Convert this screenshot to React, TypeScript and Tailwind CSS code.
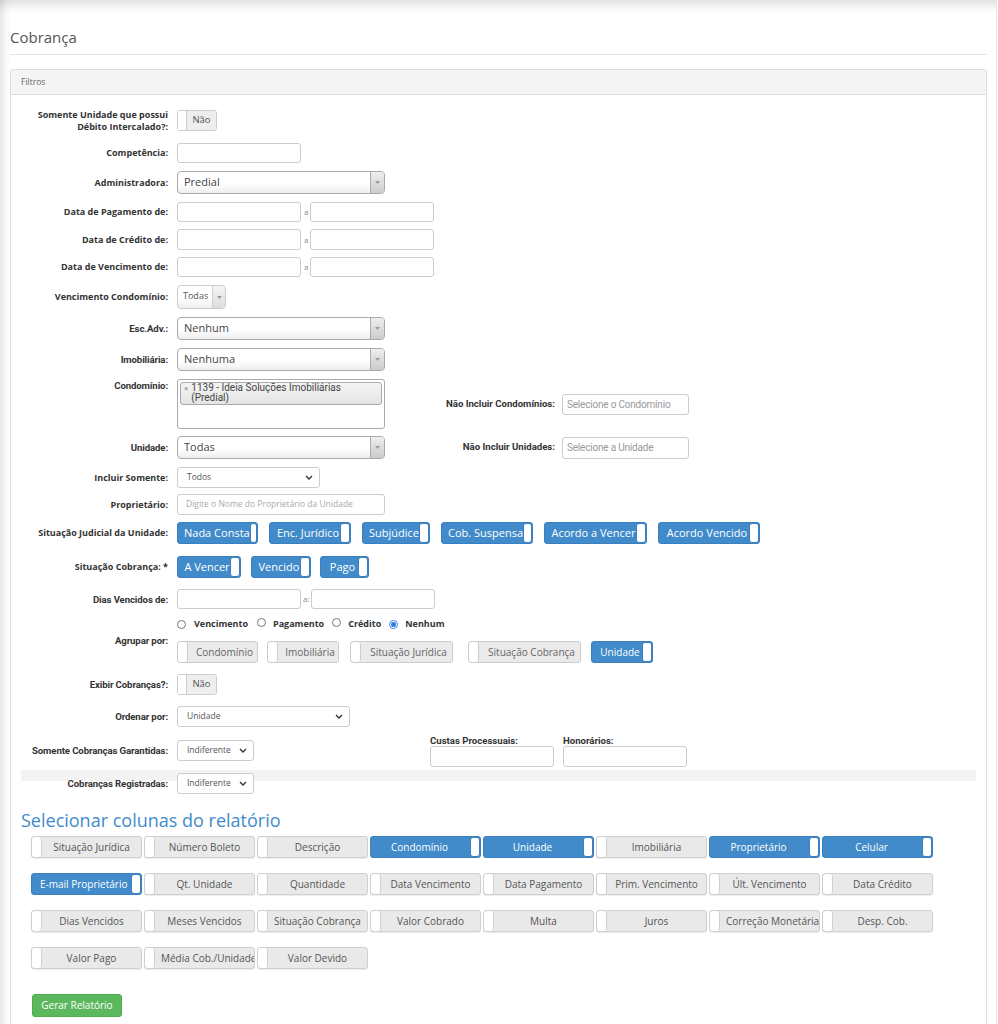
import React from "react";

type P = { children?: React.ReactNode; className?: string };

function Lbl({ children, className = "" }: P) {
  return (
    <div className={`w-[157px] shrink-0 text-right font-bold text-[9px] leading-[12px] text-[#333] font-['Open_Sans',sans-serif] ${className}`}>
      {children}
    </div>
  );
}

function LblC({ children, className = "" }: P) {
  return (
    <div className={`w-[157px] shrink-0 text-right font-bold text-[9.6px] leading-[11px] text-[#333] font-['Roboto',sans-serif] tracking-[-0.1px] ${className}`}>
      {children}
    </div>
  );
}

function Row({ children, className = "" }: P) {
  return <div className={`flex items-center ${className}`}>{children}</div>;
}

function Ctl({ children, className = "" }: P) {
  return <div className={`ml-[9px] flex items-center ${className}`}>{children}</div>;
}

function Inp({ className = "" }: P) {
  return <div className={`h-[20px] w-[124px] rounded-[3px] border border-[#ccc] bg-white ${className}`} />;
}

function Arrow() {
  return (
    <div className="flex w-[14px] items-center justify-center border-l border-[#aaa] bg-[linear-gradient(to_bottom,#eee,#ccc)]">
      <svg width="5" height="3" viewBox="0 0 5 3"><path d="M0 0h5L2.5 3z" fill="#999" /></svg>
    </div>
  );
}

function S2({ text, className = "" }: { text: string; className?: string }) {
  return (
    <div className={`flex h-[23px] w-[208px] overflow-hidden rounded-[4px] border border-[#aaa] bg-[linear-gradient(to_bottom,#fff_55%,#eee)] ${className}`}>
      <div className="flex-1 pl-[6px] pt-[3px] text-[11px] leading-[14px] text-[#444]">{text}</div>
      <Arrow />
    </div>
  );
}

function NSel({ text, className = "" }: { text: string; className?: string }) {
  return (
    <div className={`flex h-[21px] items-center justify-between rounded-[3px] border border-[#ccc] bg-white pl-[9px] pr-[6px] ${className}`}>
      <span className="text-[8.5px] text-[#555]">{text}</span>
      <svg width="8" height="5" viewBox="0 0 8 5"><path d="M1 1l3 3 3-3" stroke="#333" strokeWidth="1.4" fill="none" /></svg>
    </div>
  );
}

function Nao() {
  return (
    <div className="flex h-[21px] w-[40px] overflow-hidden rounded-[3px] border border-[#ccc]">
      <div className="w-[9px] border-r border-[#ccc] bg-white" />
      <div className="flex flex-1 items-center justify-center bg-[#eee] text-[9.5px] text-[#555]">Não</div>
    </div>
  );
}

function BlueT({ text, className = "", size = "text-[11px]" }: { text: string; className?: string; size?: string }) {
  return (
    <div className={`flex h-[22px] shrink-0 overflow-hidden rounded-[3px] border border-[#3a7fc0] bg-[#428bca] ${className}`}>
      <div className={`flex flex-1 items-center justify-center whitespace-nowrap pl-[6px] text-white ${size}`}>{text}</div>
      <div className="w-[10px] rounded-[3px] border border-[#3a7fc0] bg-white" />
    </div>
  );
}

function GrayT({ text, className = "" }: { text: string; className?: string }) {
  return (
    <div className={`flex h-[22px] shrink-0 overflow-hidden rounded-[3px] border border-[#ccc] bg-[#eaeaea] ${className}`}>
      <div className="w-[10px] rounded-[3px] border-r border-[#ccc] bg-white" />
      <div className="flex flex-1 items-center justify-center whitespace-nowrap pl-[4px] text-[10px] text-[#666]">{text}</div>
    </div>
  );
}

function ColBtn({ text, on }: { text: string; on?: boolean }) {
  if (on) {
    return (
      <div className="flex h-[22px] w-[111px] overflow-hidden rounded-[3px] border border-[#3a7fc0] bg-[#428bca]">
        <div className="flex-1 overflow-hidden whitespace-nowrap pl-[8px] pr-[10px] text-center text-[10px] leading-[20px] text-white">{text}</div>
        <div className="w-[10px] shrink-0 rounded-[3px] border border-[#3a7fc0] bg-white" />
      </div>
    );
  }
  return (
    <div className="flex h-[22px] w-[111px] overflow-hidden rounded-[3px] border border-[#d0d0d0] bg-[#e9e9e9] shadow-[0_1px_1px_rgba(0,0,0,0.08)]">
      <div className="w-[10px] shrink-0 rounded-[3px] border-r border-[#d0d0d0] bg-white" />
      <div className="flex-1 overflow-hidden whitespace-nowrap px-[6px] text-center text-[10px] leading-[20px] text-[#555]">{text}</div>
    </div>
  );
}

function Radio({ on }: { on?: boolean }) {
  return on ? (
    <span className="inline-flex h-[9px] w-[9px] items-center justify-center rounded-full border border-[#3b82f6] bg-white">
      <span className="h-[5px] w-[5px] rounded-full bg-[#2f7ce0]" />
    </span>
  ) : (
    <span className="inline-block h-[9px] w-[9px] rounded-full border border-[#777] bg-white" />
  );
}

const cols: [string, boolean][][] = [
  [["Situação Jurídica", false], ["Número Boleto", false], ["Descrição", false], ["Condomínio", true], ["Unidade", true], ["Imobiliária", false], ["Proprietário", true], ["Celular", true]],
  [["E-mail Proprietário", true], ["Qt. Unidade", false], ["Quantidade", false], ["Data Vencimento", false], ["Data Pagamento", false], ["Prim. Vencimento", false], ["Últ. Vencimento", false], ["Data Crédito", false]],
  [["Dias Vencidos", false], ["Meses Vencidos", false], ["Situação Cobrança", false], ["Valor Cobrado", false], ["Multa", false], ["Juros", false], ["Correção Monetária", false], ["Desp. Cob.", false]],
  [["Valor Pago", false], ["Média Cob./Unidade", false], ["Valor Devido", false]],
];

export default function App() {
  return (
    <div className="min-h-[1024px] w-[997px] border-r border-[#e6e6e6] bg-white font-['Open_Sans',sans-serif] shadow-[inset_10px_0_8px_-7px_rgba(0,0,0,0.13),inset_0_14px_10px_-9px_rgba(0,0,0,0.13)]">
      <div className="pl-[10px] pr-[9px] pt-[27px]">
        <div className="h-[28px] border-b border-[#e3e3e3] text-[15px] leading-[20px] text-[#555]">Cobrança</div>
        <div className="mt-[14px] rounded-t-[3px] border border-[#ddd] border-b-0">
          <div className="flex h-[25px] items-center border-b border-[#ddd] bg-[#f5f5f5] pl-[10px] text-[8.5px] text-[#666]">Filtros</div>
          <div className="pb-[10px]">
            <Row className="mt-[15px] h-[21px]">
              <Lbl>Somente Unidade que possui<br />Débito Intercalado?:</Lbl>
              <Ctl><Nao /></Ctl>
            </Row>
            <Row className="mt-[12px]">
              <Lbl>Competência:</Lbl>
              <Ctl><Inp /></Ctl>
            </Row>
            <Row className="mt-[8px]">
              <Lbl>Administradora:</Lbl>
              <Ctl><S2 text="Predial" /></Ctl>
            </Row>
            <Row className="mt-[8px]">
              <Lbl>Data de Pagamento de:</Lbl>
              <Ctl><Inp /><span className="ml-[3px] mr-[2px] text-[8px] text-[#888]">a</span><Inp /></Ctl>
            </Row>
            <Row className="mt-[7px]">
              <Lbl>Data de Crédito de:</Lbl>
              <Ctl><Inp className="h-[21px]" /><span className="ml-[3px] mr-[2px] text-[8px] text-[#888]">a</span><Inp className="h-[21px]" /></Ctl>
            </Row>
            <Row className="mt-[7px]">
              <Lbl>Data de Vencimento de:</Lbl>
              <Ctl><Inp /><span className="ml-[3px] mr-[2px] text-[8px] text-[#888]">a</span><Inp /></Ctl>
            </Row>
            <Row className="mt-[8px]">
              <Lbl>Vencimento Condomínio:</Lbl>
              <Ctl>
                <div className="flex h-[24px] w-[49px] overflow-hidden rounded-[4px] border border-[#ccc] bg-[linear-gradient(to_bottom,#fff_55%,#eee)]">
                  <div className="flex-1 pl-[5px] pt-[4px] text-[9px] leading-[12px] text-[#555]">Todas</div>
                  <div className="flex w-[13px] items-center justify-center border-l border-[#ccc] bg-[linear-gradient(to_bottom,#f4f4f4,#ddd)]">
                    <svg width="5" height="3" viewBox="0 0 5 3"><path d="M0 0h5L2.5 3z" fill="#999" /></svg>
                  </div>
                </div>
              </Ctl>
            </Row>
            <Row className="mt-[8px]">
              <LblC>Esc.Adv.:</LblC>
              <Ctl><S2 text="Nenhum" /></Ctl>
            </Row>
            <Row className="mt-[8px]">
              <LblC>Imobiliária:</LblC>
              <Ctl><S2 text="Nenhuma" /></Ctl>
            </Row>
            <div className="mt-[8px] flex items-start">
              <LblC className="pt-[1px]">Condomínio:</LblC>
              <div className="ml-[9px] h-[50px] w-[208px] rounded-[3px] border border-[#aaa] bg-white p-[2px]">
                <div className="flex h-[23px] items-start gap-[3px] rounded-[3px] border border-[#aaa] bg-[linear-gradient(to_bottom,#f4f4f4,#e4e4e4)] pl-[3px] pt-[0px] font-['Roboto',sans-serif] text-[10px] leading-[10px] text-[#444]">
                  <span className="pt-[1px] text-[8px] text-[#888]">×</span>
                  <span>1139 - Ideia Soluções Imobiliárias<br />(Predial)</span>
                </div>
              </div>
              <div className="flex h-[50px] items-center">
                <div className="w-[170px] text-right font-['Roboto',sans-serif] text-[9.6px] font-bold text-[#333]">Não Incluir Condomínios:</div>
                <div className="ml-[7px] flex h-[21px] w-[127px] items-center rounded-[3px] border border-[#ccc] bg-white pl-[4px] font-['Roboto',sans-serif] text-[10px] tracking-[-0.2px] text-[#999]">Selecione o Condomínio</div>
              </div>
            </div>
            <Row className="mt-[7px]">
              <LblC>Unidade:</LblC>
              <Ctl><S2 text="Todas" /></Ctl>
              <div className="w-[170px] text-right font-['Roboto',sans-serif] text-[9.6px] font-bold text-[#333]">Não Incluir Unidades:</div>
              <div className="ml-[7px] flex h-[22px] w-[127px] items-center rounded-[3px] border border-[#ccc] bg-white pl-[4px] font-['Roboto',sans-serif] text-[10px] tracking-[-0.2px] text-[#999]">Selecione a Unidade</div>
            </Row>
            <Row className="mt-[8px]">
              <Lbl>Incluir Somente:</Lbl>
              <Ctl><NSel text="Todos" className="w-[143px]" /></Ctl>
            </Row>
            <Row className="mt-[6px]">
              <Lbl>Proprietário:</Lbl>
              <Ctl>
                <div className="flex h-[21px] w-[208px] items-center rounded-[3px] border border-[#ccc] bg-white pl-[8px] text-[8.5px] text-[#aaa]">Digite o Nome do Proprietário da Unidade</div>
              </Ctl>
            </Row>
            <Row className="mt-[7px]">
              <Lbl>Situação Judicial da Unidade:</Lbl>
              <Ctl className="gap-[11px]">
                <BlueT text="Nada Consta" className="w-[81px]" />
                <BlueT text="Enc. Jurídico" className="w-[82px]" />
                <BlueT text="Subjúdice" className="w-[68px]" />
                <BlueT text="Cob. Suspensa" className="w-[92px]" />
                <BlueT text="Acordo a Vencer" className="w-[103px]" />
                <BlueT text="Acordo Vencido" className="w-[102px]" />
              </Ctl>
            </Row>
            <Row className="mt-[12px]">
              <Lbl>Situação Cobrança: *</Lbl>
              <Ctl>
                <BlueT text="A Vencer" className="w-[64px]" />
                <BlueT text="Vencido" className="ml-[10px] w-[60px]" />
                <BlueT text="Pago" className="ml-[9px] w-[49px]" />
              </Ctl>
            </Row>
            <Row className="mt-[11px]">
              <LblC>Dias Vencidos de:</LblC>
              <Ctl><Inp /><span className="ml-[2px] mr-[1px] text-[8px] text-[#888]">a:</span><Inp /></Ctl>
            </Row>
            <Row className="mt-[9px]">
              <LblC>Agrupar por:</LblC>
              <div className="ml-[9px] flex flex-col">
                <div className="flex h-[12px] items-center text-[9px] font-bold text-[#333]">
                  <Radio /><span className="ml-[8px]">Vencimento</span>
                  <span className="ml-[9px]"><Radio /></span><span className="ml-[7px]">Pagamento</span>
                  <span className="ml-[8px]"><Radio /></span><span className="ml-[7px]">Crédito</span>
                  <span className="ml-[8px]"><Radio on /></span><span className="ml-[7px]">Nenhum</span>
                </div>
                <div className="mt-[11px] flex">
                  <GrayT text="Condomínio" className="w-[81px]" />
                  <GrayT text="Imobiliária" className="ml-[9px] w-[72px]" />
                  <GrayT text="Situação Jurídica" className="ml-[11px] w-[103px]" />
                  <GrayT text="Situação Cobrança" className="ml-[15px] w-[113px]" />
                  <BlueT text="Unidade" size="text-[10px]" className="ml-[10px] w-[62px]" />
                </div>
              </div>
            </Row>
            <Row className="mt-[11px]">
              <LblC>Exibir Cobranças?:</LblC>
              <Ctl><Nao /></Ctl>
            </Row>
            <Row className="mt-[11px]">
              <LblC>Ordenar por:</LblC>
              <Ctl><NSel text="Unidade" className="h-[20px] w-[173px]" /></Ctl>
            </Row>
            <div className="mt-[8px] flex items-start">
              <LblC className="mt-[10px]">Somente Cobranças Garantidas:</LblC>
              <Ctl className="mt-[5px]"><NSel text="Indiferente" className="h-[20px] w-[77px]" /></Ctl>
              <div className="ml-[176px] flex flex-col">
                <div className="h-[11px] font-['Roboto',sans-serif] text-[9.6px] font-bold leading-[11px] text-[#333]">Custas Processuais:</div>
                <Inp className="h-[21px] w-[123px]" />
              </div>
              <div className="ml-[9px] flex flex-col">
                <div className="h-[11px] font-['Roboto',sans-serif] text-[9.6px] font-bold leading-[11px] text-[#333]">Honorários:</div>
                <Inp className="h-[21px] w-[123px]" />
              </div>
            </div>
            <div className="mt-[3px] bg-[linear-gradient(#f3f3f3,#f3f3f3)] bg-[length:955px_11px] bg-[position:10px_0] bg-no-repeat pt-[3px]">
              <Row>
                <LblC>Cobranças Registradas:</LblC>
                <Ctl><NSel text="Indiferente" className="w-[77px]" /></Ctl>
              </Row>
            </div>
            <div className="ml-[10px] mt-[15px] text-[18px] leading-[22px] text-[#428bca]">Selecionar colunas do relatório</div>
            <div className="ml-[20px] mt-[5px] flex flex-col gap-y-[15px]">
              {cols.map((r, i) => (
                <div key={i} className="flex gap-x-[2px]">
                  {r.map(([t, on]) => (
                    <ColBtn key={t} text={t} on={on} />
                  ))}
                </div>
              ))}
            </div>
            <div className="ml-[21px] mt-[25px] flex h-[23px] w-[90px] items-center justify-center rounded-[3px] border border-[#4cae4c] bg-[#5cb85c] text-[10px] text-white">Gerar Relatório</div>
          </div>
        </div>
      </div>
    </div>
  );
}
